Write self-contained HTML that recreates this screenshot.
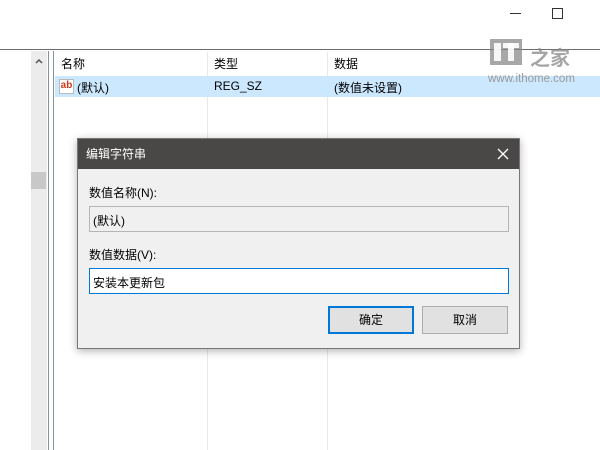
<!DOCTYPE html><html><head><meta charset="utf-8"><style>
*{margin:0;padding:0;box-sizing:border-box}
body{width:600px;height:450px;overflow:hidden;background:#fff;position:relative;font-family:"Liberation Sans","Noto Sans CJK SC",sans-serif;font-size:12px;color:#000}
.a{position:absolute}
</style></head><body>
<div class="a" style="left:510px;top:13px;width:11px;height:1px;background:#333"></div>
<div class="a" style="left:552px;top:8px;width:11px;height:11px;border:1px solid #333"></div>
<div class="a" style="left:0;top:49px;width:600px;height:1px;background:#6d6d6d"></div>
<div class="a" style="left:31px;top:51px;width:16px;height:399px;background:#ececec"></div>
<svg class="a" style="left:35px;top:58px" width="8" height="6"><path d="M1 5L4 2L7 5" stroke="#555" stroke-width="1.5" fill="none"/></svg>
<div class="a" style="left:31px;top:172px;width:15px;height:17px;background:#c8c8c8"></div>
<div class="a" style="left:48px;top:51px;width:1px;height:399px;background:#8a8f99"></div>
<div class="a" style="left:53px;top:51px;width:1px;height:399px;background:#8a8f99"></div>
<div class="a" style="left:207px;top:52px;width:1px;height:398px;background:#e8e8e8"></div>
<div class="a" style="left:327px;top:52px;width:1px;height:398px;background:#e8e8e8"></div>
<div class="a" style="left:61px;top:55px">名称</div>
<div class="a" style="left:214px;top:55px">类型</div>
<div class="a" style="left:334px;top:55px">数据</div>
<div class="a" style="left:55px;top:76px;width:545px;height:21px;background:#cce8ff"></div>
<div class="a" style="left:59px;top:79px;width:15px;height:15px;border:1px solid #bbb;background:#fff;color:#d03a1a;font-weight:bold;font-size:10px;line-height:11px;text-align:center">ab</div>
<div class="a" style="left:77px;top:79px">(默认)</div>
<div class="a" style="left:214px;top:79px">REG_SZ</div>
<div class="a" style="left:334px;top:79px">(数值未设置)</div>
<div class="a" style="left:490px;top:39px;width:32px;height:26px;background:#8a8a8a;opacity:.75"></div>
<div class="a" style="left:494px;top:43px;width:7px;height:18px;background:#fff;opacity:.9"></div>
<div class="a" style="left:503px;top:43px;width:16px;height:5px;background:#fff;opacity:.9"></div>
<div class="a" style="left:508px;top:43px;width:6px;height:18px;background:#fff;opacity:.9"></div>
<div class="a" style="left:530px;top:42px;color:#888;font-size:20px;font-weight:bold;opacity:.75">之家</div>
<div class="a" style="left:488px;top:73px;color:#999;font-size:11.5px">www.ithome.com</div>
<div class="a" style="left:77px;top:138px;width:443px;height:211px;background:#f0f0f0;border:1px solid #777;box-shadow:0 2px 8px rgba(0,0,0,.3)">
<div style="height:30px;background:#4a4846;color:#fff;font-size:12px;line-height:30px;padding-left:8px">编辑字符串</div>
<svg class="a" style="right:10px;top:9px" width="12" height="12"><path d="M1 1L11 11M11 1L1 11" stroke="#fff" stroke-width="1.3"/></svg>
<div class="a" style="left:11px;top:45px">数值名称(N):</div>
<div class="a" style="left:11px;top:67px;width:420px;height:26px;border:1px solid #b5b5b5;background:#f0f0f0;padding:5px 3px">(默认)</div>
<div class="a" style="left:11px;top:107px">数值数据(V):</div>
<div class="a" style="left:11px;top:129px;width:420px;height:26px;border:1px solid #0078d7;background:#fff;padding:5px 3px">安装本更新包</div>
<div class="a" style="left:250px;top:167px;width:86px;height:28px;border:2px solid #0078d7;background:#e1e1e1;text-align:center;line-height:24px">确定</div>
<div class="a" style="left:344px;top:167px;width:86px;height:28px;border:1px solid #adadad;background:#e1e1e1;text-align:center;line-height:26px">取消</div>
</div>
</body></html>
